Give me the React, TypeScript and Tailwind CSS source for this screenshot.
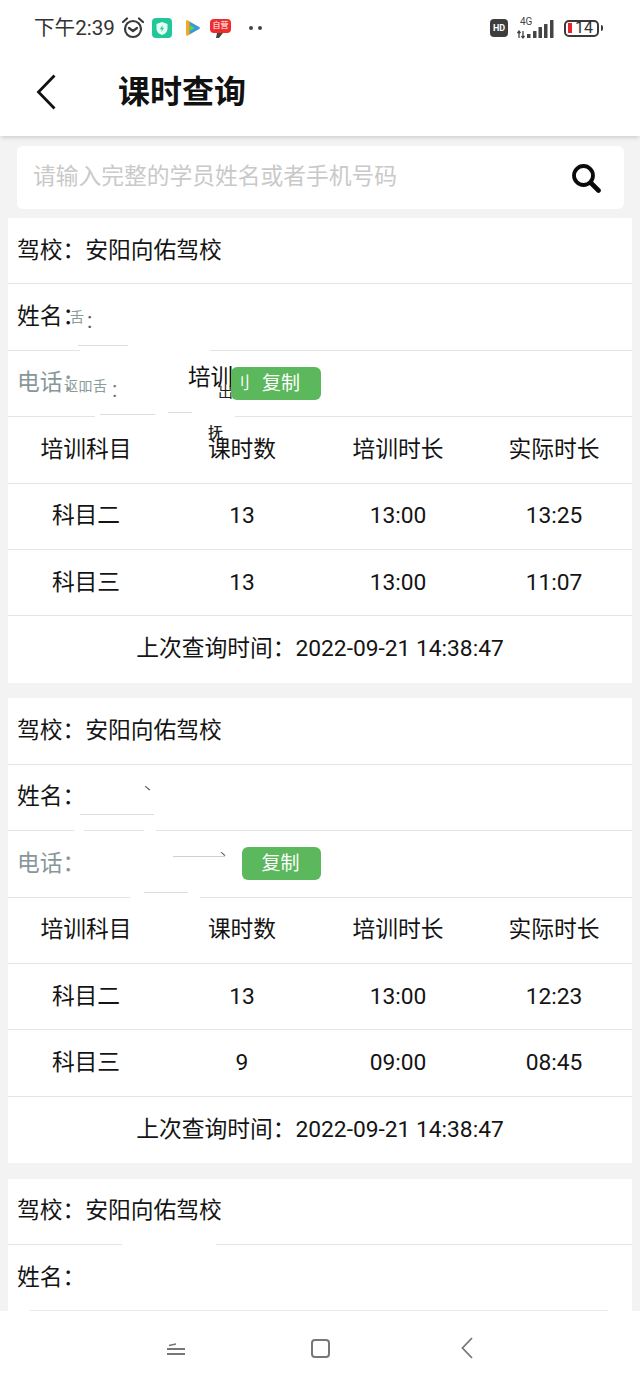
type CourseRow = { name: string; hours: string; planned: string; actual: string };

const cards: { rows: CourseRow[] }[] = [
  {
    rows: [
      { name: '科目二', hours: '13', planned: '13:00', actual: '13:25' },
      { name: '科目三', hours: '13', planned: '13:00', actual: '11:07' },
    ],
  },
  {
    rows: [
      { name: '科目二', hours: '13', planned: '13:00', actual: '12:23' },
      { name: '科目三', hours: '9', planned: '09:00', actual: '08:45' },
    ],
  },
];

// full-width colon, as in the labels of the original page
const COLON = '\uFF1A';

const rowClass = 'flex h-[66.4px] items-center border-b border-[#e4e4e4] px-[9px] shrink-0';
const gridRowClass = 'grid h-[66.4px] grid-cols-4 items-center border-b border-[#e4e4e4] text-center shrink-0';

function StatusBar() {
  return (
    <div className="flex h-[56px] items-center justify-between pl-[34px] pr-[37px] text-[#333]">
      <div className="flex items-center">
        <span className="text-[20.6px] leading-none">下午2:39</span>
        <svg className="ml-[6px]" width="24" height="24" viewBox="0 0 24 24" fill="none" stroke="#3a3a3a" strokeWidth="2.2">
          <circle cx="12" cy="13" r="8" />
          <path d="M8 12l4 3 4-3" strokeLinecap="round" strokeLinejoin="round" />
          <path d="M2 6l4-3.5M22 6l-4-3.5" strokeLinecap="round" />
        </svg>
        <div className="ml-[7px] flex h-[20px] w-[20px] items-center justify-center rounded-[4px] bg-[#1fc79a]">
          <svg width="14" height="15" viewBox="0 0 14 15">
            <path d="M7 1l5.500 2v4.500C12.500 11 10 13 7 14 4 13 1.500 11 1.500 7.500V3z" fill="#e6fbf4" />
            <path d="M7.600 4L5 8.200h1.800L6.400 11 9 6.800H7.200z" fill="#1fc79a" />
          </svg>
        </div>
        <svg className="ml-[11px]" width="18" height="18" viewBox="0 0 18 18">
          <path d="M3 2.500c0-1 1-1.500 2-1L16 8c1 .6 1 1.500 0 2L5 16.500c-1 .5-2 0-2-1z" fill="#f5a623" />
          <path d="M6.500 2.800L16 8c1 .6 1 1.500 0 2l-9.500 5.200z" fill="#2f9be8" />
          <path d="M6.500 6l5.500 3-5.500 3z" fill="#6fce3f" />
        </svg>
        <div className="ml-[9px] flex flex-col items-center">
          <div className="flex h-[14px] w-[21px] items-center justify-center rounded-[4px] bg-[#ee2c2c] text-[8px] leading-none text-white">
            自营
          </div>
          <svg width="8" height="5" viewBox="0 0 8 5">
            <path d="M1 0h6L3 5H0z" fill="#444" />
          </svg>
        </div>
        <div className="ml-[18px] flex gap-[5px]">
          <span className="h-[4px] w-[4px] rounded-full bg-[#444]" />
          <span className="h-[4px] w-[4px] rounded-full bg-[#444]" />
        </div>
      </div>
      <div className="flex items-center">
        <div className="flex h-[18px] w-[18px] items-center justify-center rounded-[4px] bg-[#3d3d3d] text-[9px] font-bold leading-none text-white">
          HD
        </div>
        <svg className="ml-[9px]" width="38" height="24" viewBox="0 0 38 24">
          <text x="3" y="9" fontSize="10" fill="#444" fontFamily="Roboto, sans-serif">4G</text>
          <path d="M2 15v7M0.500 17l1.500-2 1.500 2M6 22v-7M4.500 20l1.500 2 1.500-2" stroke="#444" strokeWidth="1.300" fill="none" />
          <rect x="10" y="18" width="3.500" height="4" fill="#444" />
          <rect x="16" y="15" width="3.500" height="7" rx=".5" fill="#444" />
          <rect x="21.500" y="11" width="3.500" height="11" rx=".5" fill="#444" />
          <rect x="27" y="8" width="3.500" height="14" rx=".5" fill="#444" />
          <rect x="33" y="4" width="3.500" height="18" rx=".5" fill="#444" />
        </svg>
        <div className="ml-[9px] flex items-center">
          <div className="flex h-[17px] w-[35px] items-center rounded-[5px] border-2 border-[#3a3a3a] pl-[2px]">
            <span className="h-[10px] w-[4px] bg-[#e8232a]" />
            <span className="ml-[3px] text-[16px] leading-none text-[#333]">14</span>
          </div>
          <span className="ml-[2px] h-[6px] w-[2px] rounded-r bg-[#3a3a3a]" />
        </div>
      </div>
    </div>
  );
}

function Header() {
  return (
    <div className="relative z-10 flex h-[80px] items-center bg-white pb-[9px] shadow-[0_3px_4px_-1px_rgba(0,0,0,0.14)]">
      <svg className="ml-[36px] shrink-0" width="20" height="36" viewBox="0 0 20 36" fill="none" stroke="#111" strokeWidth="2.800">
        <path d="M18.500 1.500L2.500 18l16 16.500" />
      </svg>
      <h1 className="ml-[62px] text-[32px] font-bold leading-none text-[#111]">课时查询</h1>
    </div>
  );
}

function SearchBox() {
  return (
    <div className="ml-[17px] mr-[16px] mt-[10px] flex h-[63px] shrink-0 items-center justify-between rounded-[6px] bg-white pl-[16px] pr-[23px]">
      <span className="text-[22.75px] leading-none text-[#c9c9c9]">请输入完整的学员姓名或者手机号码</span>
      <svg width="30" height="30" viewBox="0 0 30 30" fill="none" stroke="#0a0a0a">
        <circle cx="12.500" cy="12.500" r="9.500" strokeWidth="3.800" />
        <path d="M20 20l7.500 7.500" strokeWidth="4.600" strokeLinecap="round" />
      </svg>
    </div>
  );
}

function CopyButton({ smudged }: { smudged?: boolean }) {
  return (
    <button
      className={
        smudged
          ? 'relative z-10 flex h-[33px] w-[90px] items-center justify-between rounded-[6px] bg-[#5cb85c] pl-[2px] pr-[21px] text-[19px] leading-none text-white'
          : 'relative z-10 flex h-[33px] w-[79px] items-center justify-center rounded-[6px] bg-[#5cb85c] pr-[2px] text-[19px] leading-none text-white'
      }
    >
      {smudged && <span className="text-[17px]">刂</span>}
      <span>复制</span>
    </button>
  );
}

function SmudgesFirst() {
  // leftovers from the redaction on the first card
  return (
    <>
      <span className="absolute left-[62px] top-[92px] text-[14px] leading-none text-[#8a9a98]">舌</span>
      <span className="absolute left-[79px] top-[92px] text-[22px] leading-none text-[#555]">:</span>
      <span className="absolute left-[56px] top-[161px] text-[14px] leading-none tracking-[0.5px] text-[#8a9a98]">讴吅舌</span>
      <span className="absolute left-[104px] top-[161px] text-[22px] leading-none text-[#777]">:</span>
      <span className="absolute left-[180px] top-[149px] text-[22.6px] leading-none text-[#111]">培训</span>
      <span className="absolute left-[210px] top-[167px] text-[15px] leading-none text-[#222]">出</span>
      <span className="absolute left-[200px] top-[208px] text-[15px] font-medium leading-none text-[#222]">抚</span>
    </>
  );
}

function Patch({ className }: { className: string }) {
  return <span className={`absolute h-[6px] bg-white ${className}`} />;
}

function Scratch({ className }: { className: string }) {
  return <span className={`absolute h-px bg-[#dcdcdc] ${className}`} />;
}

function ResultCard({ rows, first }: { rows: CourseRow[]; first?: boolean }) {
  return (
    <div className="relative mx-[8px] mb-[15.7px] flex shrink-0 flex-col bg-white">
      <div className={rowClass}>{`驾校${COLON}安阳向佑驾校`}</div>
      <div className={rowClass}>{`姓名${COLON}`}</div>
      <div className={rowClass}>
        <span className={first ? 'w-[214px] shrink-0 text-[#86979a]' : 'w-[225px] shrink-0 text-[#86979a]'}>{`电话${COLON}`}</span>
        <CopyButton smudged={first} />
      </div>
      <div className={gridRowClass}>
        <span>培训科目</span>
        <span>课时数</span>
        <span>培训时长</span>
        <span>实际时长</span>
      </div>
      {rows.map((row) => (
        <div key={row.name} className={gridRowClass}>
          <span>{row.name}</span>
          <span>{row.hours}</span>
          <span>{row.planned}</span>
          <span>{row.actual}</span>
        </div>
      ))}
      <div className="flex h-[66.4px] shrink-0 items-center justify-center">{`上次查询时间${COLON}2022-09-21 14:38:47`}</div>
      {first ? (
        <>
          <Patch className="left-[72px] top-[129px] w-[130px]" />
          <Patch className="left-[87px] top-[195px] w-[140px]" />
          <SmudgesFirst />
          <Scratch className="left-[70px] top-[127px] w-[50px]" />
          <Scratch className="left-[92px] top-[196px] w-[55px]" />
          <Scratch className="left-[160px] top-[194px] w-[24px]" />
        </>
      ) : (
        <>
          <span className="absolute left-[134px] top-[86px] text-[11px] leading-none text-[#222]">丶</span>
          <Scratch className="left-[72px] top-[116px] w-[74px]" />
          <Patch className="left-[66px] top-[129px] w-[10px]" />
          <Patch className="left-[136px] top-[129px] w-[12px]" />
          <span className="absolute left-[165px] top-[158px] h-px w-[52px] bg-[#cfcfcf]" />
          <span className="absolute left-[210px] top-[152px] text-[10px] leading-none text-[#333]">丶</span>
          <Patch className="left-[122px] top-[195px] w-[70px]" />
          <Scratch className="left-[136px] top-[194px] w-[44px]" />
        </>
      )}
    </div>
  );
}

function BottomNav() {
  return (
    <div className="relative z-10 flex h-[76px] shrink-0 items-center justify-center bg-white pb-[2px]">
      <span className="absolute left-[30px] right-[32px] top-[-1px] h-px bg-[#e8e8e8]" />
      <div className="flex items-center">
        <svg width="18" height="16" viewBox="0 0 18 16" fill="none" stroke="#777" strokeWidth="1.800">
          <path d="M2 5.500L9 4" strokeWidth="1.300" />
          <path d="M0 9h18M0 14h18" />
        </svg>
        <div className="ml-[126px] h-[19px] w-[19px] rounded-[4px] border-2 border-[#777]" />
        <svg className="ml-[131px]" width="12" height="22" viewBox="0 0 12 22" fill="none" stroke="#777" strokeWidth="1.800">
          <path d="M11 1L1.500 11 11 21" />
        </svg>
      </div>
    </div>
  );
}

export default function App() {
  return (
    <div className="flex h-[1387px] w-[640px] flex-col overflow-hidden bg-[#f3f3f3] font-['Roboto','Noto_Sans_CJK_SC',sans-serif] text-[22.75px] text-[#141414]">
      <div className="shrink-0 bg-white">
        <StatusBar />
        <Header />
      </div>
      <div className="flex min-h-0 flex-1 flex-col overflow-hidden">
        <SearchBox />
        <div className="h-[9px] shrink-0" />
        {cards.map((card, i) => (
          <ResultCard key={i} rows={card.rows} first={i === 0} />
        ))}
        <div className="relative mx-[8px] flex shrink-0 flex-col bg-white">
          <div className={rowClass}>{`驾校${COLON}安阳向佑驾校`}</div>
          <div className={rowClass}>{`姓名${COLON}`}</div>
          <Patch className="left-[114px] top-[63px] w-[94px]" />
        </div>
      </div>
      <BottomNav />
    </div>
  );
}
